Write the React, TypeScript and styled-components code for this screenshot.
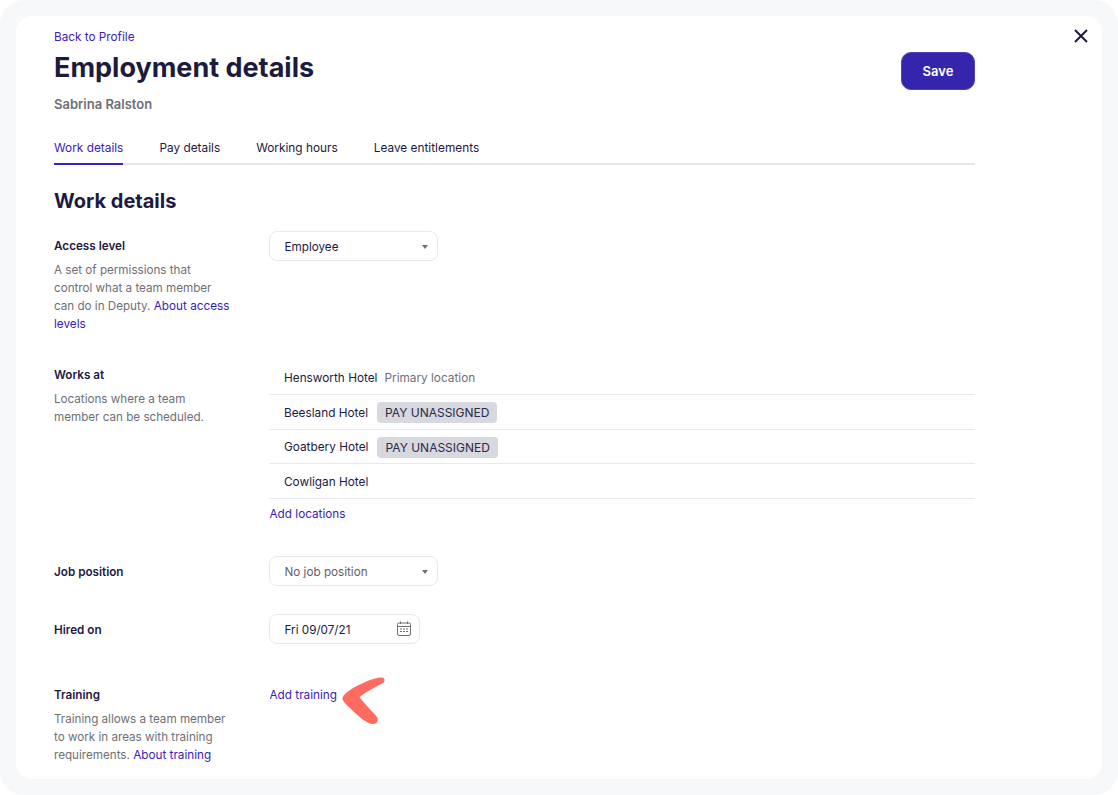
import styled, { createGlobalStyle } from "styled-components";

const GlobalStyle = createGlobalStyle`
  html, body {
    margin: 0;
    padding: 0;
    background: #ffffff;
  }
  * {
    box-sizing: border-box;
  }
`;

const Frame = styled.div`
  width: 1118px;
  height: 795px;
  padding: 16px;
  background: #f7f8fa;
  border-radius: 24px;
  overflow: hidden;
  font-family: Inter, "Liberation Sans", sans-serif;
  color: #1d1a3f;
`;

const Card = styled.div`
  position: relative;
  height: 763px;
  padding: 12px 127px 0 38px;
  background: #ffffff;
  border-radius: 16px;
  overflow: hidden;
`;

const CloseButton = styled.button`
  position: absolute;
  top: 11px;
  right: 12px;
  width: 18px;
  height: 18px;
  padding: 0;
  border: 0;
  background: none;
  color: #1d1a3f;
`;

const Link = styled.a`
  color: #3a22b8;
  font-size: 11.75px;
  line-height: 18px;
  text-decoration: none;
`;

const Header = styled.header`
  display: flex;
  justify-content: space-between;
  align-items: flex-start;
`;

const BackRow = styled.div`
  height: 18px;
  font-size: 11.65px;
  line-height: 18px;
`;

const Title = styled.h1`
  margin: 3px 0 0;
  font-size: 27px;
  line-height: 38px;
  font-weight: 700;
`;

const Person = styled.div`
  margin-top: 8px;
  font-size: 13px;
  line-height: 18px;
  font-weight: 600;
  color: #6f6f76;
`;

const SaveButton = styled.button`
  width: 74px;
  height: 38px;
  margin-top: 24px;
  border: 1px solid #4f40ba;
  border-radius: 10px;
  background: #3525ac;
  color: #ffffff;
  font-family: inherit;
  font-size: 13px;
  font-weight: 600;
`;

const Tabs = styled.nav`
  display: flex;
  gap: 36px;
  margin-top: 26px;
  border-bottom: 2px solid #e6e6ee;
`;

const Tab = styled.div<{ $active?: boolean }>`
  height: 26px;
  margin-bottom: -2px;
  font-size: 11.85px;
  line-height: 18px;
  color: ${(p) => (p.$active ? "#3a22b8" : "#1d1a3f")};
  border-bottom: 2px solid ${(p) => (p.$active ? "#3a22b8" : "transparent")};
`;

const SectionTitle = styled.h2`
  margin: 22px 0 0;
  font-size: 20px;
  line-height: 28px;
  font-weight: 700;
`;

const FormRow = styled.section<{ $top: number }>`
  display: grid;
  grid-template-columns: 215px 1fr;
  margin-top: ${(p) => p.$top}px;
`;

const Label = styled.div<{ $offset?: number }>`
  padding-top: ${(p) => p.$offset ?? 0}px;
  font-size: 11.7px;
  line-height: 18px;
  font-weight: 600;
`;

const Help = styled.p`
  width: 178px;
  margin: 6px 0 0;
  font-size: 11.65px;
  line-height: 18px;
  color: #6f6f76;
`;

const Field = styled.div<{ $width: number; $muted?: boolean }>`
  display: flex;
  align-items: center;
  justify-content: space-between;
  width: ${(p) => p.$width}px;
  height: 30px;
  padding: 1.5px 10px 0 14.5px;
  border: 1px solid #e8e8ee;
  border-radius: 8px;
  font-size: 11.7px;
  color: ${(p) => (p.$muted ? "#5f5f68" : "#1d1a3f")};
`;

const Caret = styled.span`
  width: 0;
  height: 0;
  margin-right: -1px;
  border-left: 3px solid transparent;
  border-right: 3px solid transparent;
  border-top: 4px solid #6f6f76;
`;

const CalendarIcon = styled.svg`
  margin: -2px -2px 0 0;
`;

const Locations = styled.ul`
  margin: 0;
  padding: 0;
  list-style: none;
`;

const Location = styled.li`
  display: flex;
  align-items: center;
  gap: 7px;
  height: 34.75px;
  padding: 2px 0 0 15px;
  border-bottom: 1px solid #e8e8ee;
  font-size: 11.8px;
`;

const Muted = styled.span`
  color: #6f6f76;
`;

const Badge = styled.span`
  height: 21px;
  margin-left: 2px;
  padding: 0 8px;
  border-radius: 4px;
  background: #d8d8df;
  font-size: 12px;
  line-height: 21px;
  color: #2c2a4a;
`;

const AddRow = styled.div`
  margin-top: 6px;
  padding-left: 0.5px;
  font-size: 11.75px;
  line-height: 18px;
`;

const TrainingAction = styled.div`
  display: flex;
  align-items: flex-start;
  gap: 5px;
  padding-left: 0.5px;
`;

const Arrow = styled.svg`
  margin-top: -9px;
  flex: none;
`;

export default function App() {
  return (
    <>
      <GlobalStyle />
      <Frame>
        <Card>
          <CloseButton aria-label="Close">
            <svg width="18" height="18" viewBox="0 0 18 18" fill="none" stroke="currentColor" strokeWidth="2">
              <path d="M3 3l12 12M15 3L3 15" />
            </svg>
          </CloseButton>

          <Header>
            <div>
              <BackRow>
                <Link href="#">Back to Profile</Link>
              </BackRow>
              <Title>Employment details</Title>
              <Person>Sabrina Ralston</Person>
            </div>
            <SaveButton>Save</SaveButton>
          </Header>

          <Tabs>
            <Tab $active>Work details</Tab>
            <Tab>Pay details</Tab>
            <Tab>Working hours</Tab>
            <Tab>Leave entitlements</Tab>
          </Tabs>

          <SectionTitle>Work details</SectionTitle>

          <FormRow $top={16}>
            <div>
              <Label $offset={6}>Access level</Label>
              <Help>
                A set of permissions that control what a team member can do in Deputy.{" "}
                <Link href="#">About access levels</Link>
              </Help>
            </div>
            <div>
              <Field $width={169}>
                Employee
                <Caret />
              </Field>
            </div>
          </FormRow>

          <FormRow $top={27}>
            <div>
              <Label $offset={6}>Works at</Label>
              <Help>Locations where a team member can be scheduled.</Help>
            </div>
            <div>
              <Locations>
                <Location>
                  Hensworth Hotel <Muted>Primary location</Muted>
                </Location>
                <Location>
                  Beesland Hotel <Badge>PAY UNASSIGNED</Badge>
                </Location>
                <Location>
                  Goatbery Hotel <Badge>PAY UNASSIGNED</Badge>
                </Location>
                <Location>Cowligan Hotel</Location>
              </Locations>
              <AddRow>
                <Link href="#">Add locations</Link>
              </AddRow>
            </div>
          </FormRow>

          <FormRow $top={33}>
            <Label $offset={7}>Job position</Label>
            <Field $width={169} $muted>
              No job position
              <Caret />
            </Field>
          </FormRow>

          <FormRow $top={28}>
            <Label $offset={7}>Hired on</Label>
            <Field $width={151}>
              Fri 09/07/21
              <CalendarIcon width="14" height="15" viewBox="0 0 14 15" fill="none" stroke="#6f6f76" strokeWidth="1">
                <rect x="0.5" y="2" width="13" height="12.5" rx="1.5" />
                <path d="M0.5 5.5h13M3.5 0.5v2.5M10.5 0.5v2.5" />
                <path d="M3 8h2M6 8h2M9 8h2M3 10.5h2M6 10.5h2M9 10.5h2" strokeWidth="1.2" />
              </CalendarIcon>
            </Field>
          </FormRow>

          <FormRow $top={42}>
            <div>
              <Label>Training</Label>
              <Help>
                Training allows a team member to work in areas with training requirements.{" "}
                <Link href="#">About training</Link>
              </Help>
            </div>
            <TrainingAction>
              <Link href="#">Add training</Link>
              <Arrow width="44" height="48" viewBox="0 0 44 48">
                <path
                  fill="#ff6b61"
                  d="M0.6 20.5C2 16.5 10 11 20 6.5C29 2.5 38 -0.5 41.5 1C43.5 2.5 42.5 5 40 6.5C33 10.5 24 14.5 17.5 20C21 25 29 33 35 40C37 43.5 35 47 31 47C25 47 16 39 9 32C4.5 27.5 -0.5 23.5 0.6 20.5Z"
                />
              </Arrow>
            </TrainingAction>
          </FormRow>
        </Card>
      </Frame>
    </>
  );
}
